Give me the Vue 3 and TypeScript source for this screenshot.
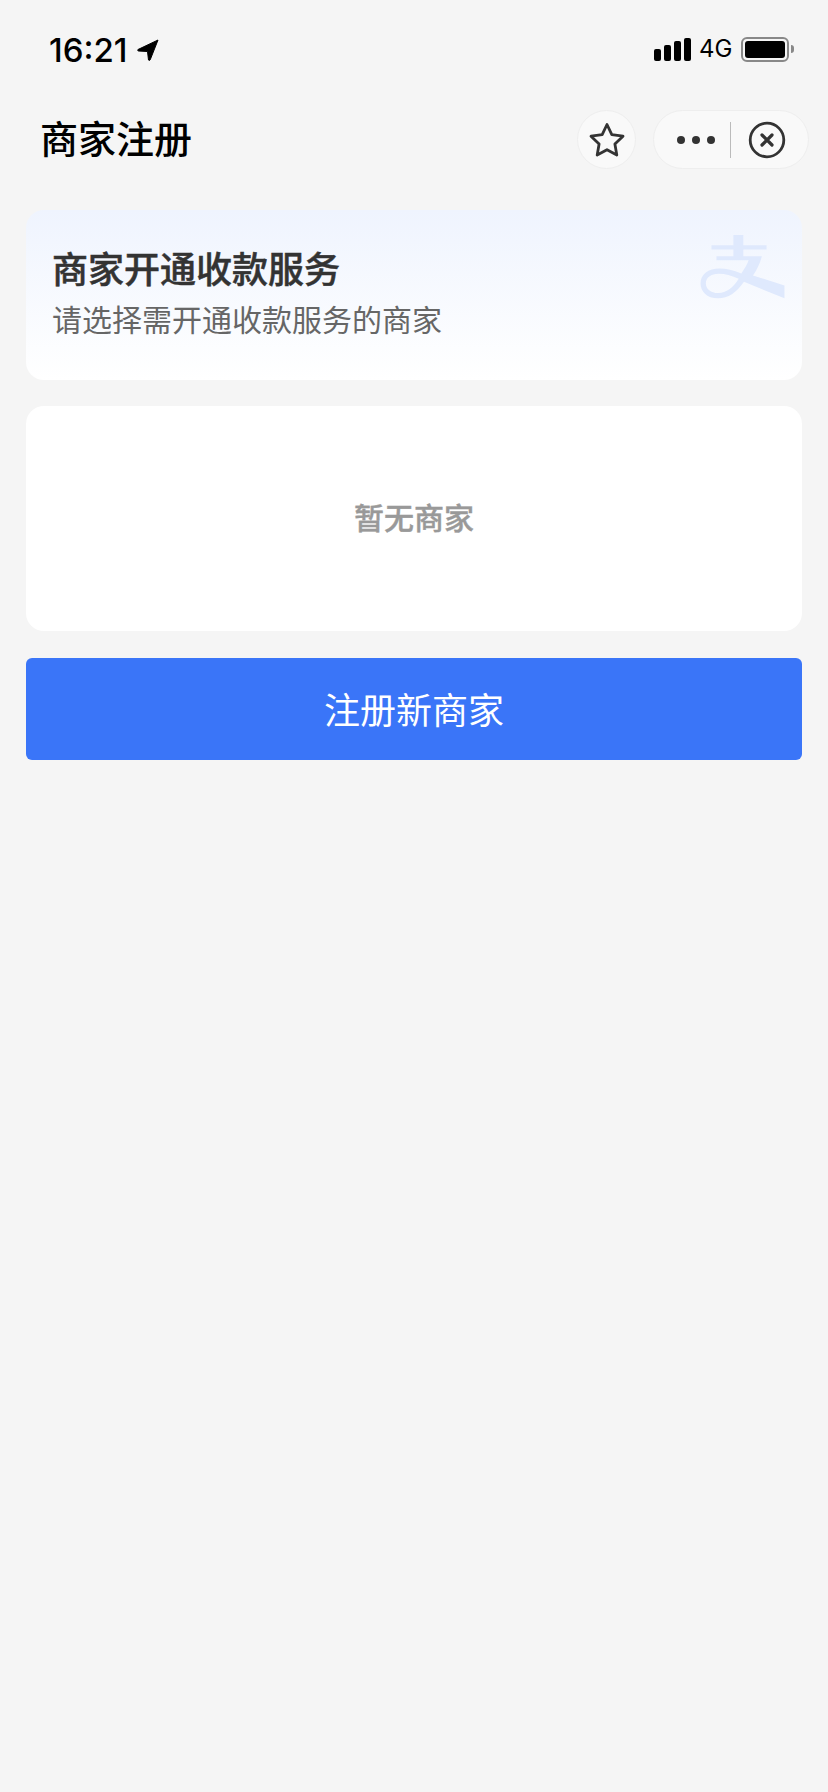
<script setup lang="ts">
const signalBars: number[] = [12, 16, 20, 23];
</script>

<template>
  <div class="page">
    <div class="status-bar">
      <div class="status-left">
        <span class="time">16:21</span>
        <svg class="location" viewBox="0 0 22 22" width="22" height="22">
          <path d="M21 1 L1 10.500 Q0 11.500 1.500 12 L10.500 12.500 L11.500 21 Q12.500 22 13.200 20.800 Z" fill="#000" stroke="#000" stroke-width="1" stroke-linejoin="round" />
        </svg>
      </div>
      <div class="status-right">
        <div class="signal">
          <i v-for="h in signalBars" :key="h" :style="{ height: h + 'px' }"></i>
        </div>
        <span class="network">4G</span>
        <div class="battery">
          <div class="battery-fill"></div>
        </div>
        <div class="battery-nub"></div>
      </div>
    </div>

    <div class="nav-bar">
      <h1 class="nav-title">商家注册</h1>
      <div class="nav-actions">
        <div class="fav-btn">
          <svg viewBox="0 0 36 36" width="36" height="36">
            <path d="M18 2.500 L22.800 12.600 L34 14.200 L25.900 22 L27.800 33 L18 27.700 L8.200 33 L10.100 22 L2 14.200 L13.200 12.600 Z" fill="none" stroke="#333" stroke-width="2.800" stroke-linejoin="round" />
          </svg>
        </div>
        <div class="capsule">
          <div class="more">
            <i></i><i></i><i></i>
          </div>
          <div class="divider"></div>
          <div class="close">
            <svg viewBox="0 0 38 38" width="38" height="38">
              <circle cx="19" cy="19" r="16.800" fill="none" stroke="#333" stroke-width="2.800" />
              <path d="M14 14 L24 24 M24 14 L14 24" fill="none" stroke="#333" stroke-width="3.200" stroke-linecap="round" />
            </svg>
          </div>
        </div>
      </div>
    </div>

    <main class="content">
      <section class="intro-card">
        <h2 class="intro-title">商家开通收款服务</h2>
        <p class="intro-desc">请选择需开通收款服务的商家</p>
        <svg class="watermark" viewBox="110 100 270 205" width="90" height="68">
          <path
            fill="#dfe9fd"
            fill-rule="evenodd"
            d="M216 106 H246 V137 H316 V150 H246 V170 H302 C295 195 285 215 275 228 L370 258 V297 L248 247 C225 280 200 297 170 297 C135 297 117 275 117 252 C117 225 140 207 175 207 C195 207 215 212 240 222 C250 205 258 195 262 182 H165 V170 H216 V150 H150 V137 H216 Z M172 223 C148 223 133 235 133 252 C133 268 148 281 170 281 C195 281 215 265 232 238 C212 229 190 223 172 223 Z"
          />
        </svg>
      </section>

      <section class="empty-card">
        <span class="empty-text">暂无商家</span>
      </section>

      <button class="register-btn" type="button">注册新商家</button>
    </main>
  </div>
</template>

<style scoped>
.page {
  min-height: 1792px;
  background: #f5f5f5;
  font-family: "Noto Sans CJK SC", "Noto Sans", sans-serif;
}

.status-bar {
  height: 88px;
  box-sizing: border-box;
  padding: 31px 34px 0 49px;
  display: flex;
  justify-content: space-between;
  align-items: flex-start;
}

.status-left {
  display: flex;
  align-items: center;
  gap: 9px;
  height: 38px;
}

.time {
  font-family: Inter, Roboto, sans-serif;
  font-size: 33px;
  font-weight: 500;
  color: #000;
  line-height: 38px;
}

.location {
  display: block;
}

.status-right {
  display: flex;
  align-items: center;
  height: 30px;
  margin-top: 3px;
}

.signal {
  display: flex;
  align-items: flex-end;
  gap: 3px;
  height: 23px;
  margin-right: 8px;
}

.signal i {
  display: block;
  width: 7px;
  background: #000;
  border-radius: 2px;
}

.network {
  font-family: Inter, Roboto, sans-serif;
  font-size: 24px;
  color: #000;
  width: 33px;
  margin-right: 9px;
  line-height: 30px;
}

.battery {
  width: 48px;
  height: 25px;
  box-sizing: border-box;
  border: 2px solid #888;
  border-radius: 6px;
  padding: 2px;
}

.battery-fill {
  height: 100%;
  background: #000;
  border-radius: 3px;
}

.battery-nub {
  width: 3px;
  height: 8px;
  margin-left: 2px;
  background: #888;
  border-radius: 0 3px 3px 0;
}

.nav-bar {
  height: 59px;
  box-sizing: border-box;
  padding: 0 19px 0 40px;
  margin: 22px 0 41px;
  display: flex;
  justify-content: space-between;
  align-items: center;
}

.nav-title {
  margin: -6px 0 0;
  font-size: 38px;
  font-weight: 500;
  color: #000;
}

.nav-actions {
  display: flex;
  align-items: center;
  gap: 17px;
}

.fav-btn {
  width: 59px;
  height: 59px;
  box-sizing: border-box;
  border: 1px solid #eeeeee;
  border-radius: 50%;
  background: #f9f9f9;
  display: flex;
  align-items: center;
  justify-content: center;
}

.capsule {
  width: 156px;
  height: 59px;
  box-sizing: border-box;
  border: 1px solid #eeeeee;
  border-radius: 30px;
  background: #f9f9f9;
  display: flex;
  align-items: center;
}

.more {
  flex: 1;
  display: flex;
  justify-content: center;
  gap: 7px;
  padding-left: 7px;
}

.more i {
  display: block;
  width: 8px;
  height: 8px;
  border-radius: 50%;
  background: #333;
}

.divider {
  width: 1px;
  height: 36px;
  background: #bbbbbb;
}

.close {
  width: 72px;
  padding-right: 5px;
  display: flex;
  justify-content: center;
}

.content {
  padding: 0 26px;
  display: flex;
  flex-direction: column;
  gap: 26px;
}

.intro-card {
  position: relative;
  height: 170px;
  box-sizing: border-box;
  padding: 32px 26px 0;
  border-radius: 18px;
  background: linear-gradient(180deg, #eff4fe 0%, #ffffff 100%);
}

.intro-title {
  margin: 0;
  font-size: 36px;
  font-weight: 500;
  line-height: 50px;
  color: #333;
  -webkit-text-stroke: 0.5px #333;
}

.intro-desc {
  margin: 5px 0 0;
  font-size: 30px;
  font-weight: 400;
  line-height: 42px;
  color: #666;
}

.watermark {
  position: absolute;
  right: 14px;
  top: 23px;
}

.empty-card {
  height: 225px;
  box-sizing: border-box;
  padding-bottom: 6px;
  border-radius: 18px;
  background: #fff;
  display: flex;
  align-items: center;
  justify-content: center;
}

.empty-text {
  font-size: 30px;
  font-weight: 500;
  color: #999;
  -webkit-text-stroke: 0.4px #999;
}

.register-btn {
  height: 102px;
  margin-top: 1px;
  padding: 0 0 2px;
  border: none;
  border-radius: 6px;
  background: #3a75f8;
  color: #fff;
  font-family: inherit;
  font-size: 36px;
  font-weight: 400;
}
</style>
